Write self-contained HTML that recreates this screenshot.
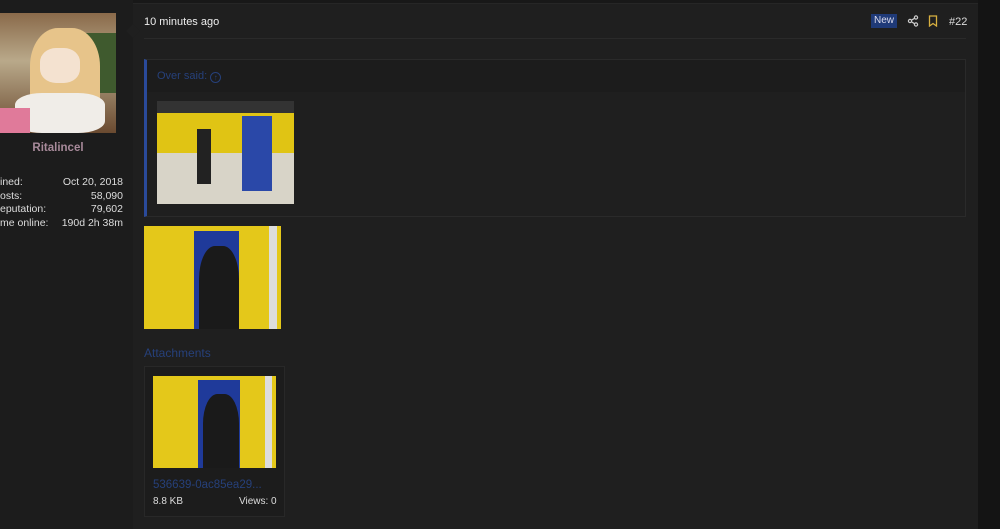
<!DOCTYPE html>
<html><head><style>
*{margin:0;padding:0;box-sizing:border-box}
body{width:1000px;height:529px;overflow:hidden;background:#1b1b1b;font-family:"Liberation Sans",sans-serif;color:#e6e6e6;position:relative;font-size:11px}
.abs{position:absolute}
.side{left:0;top:0;width:133px;height:529px;background:#1c1c1c}
.main{left:133px;top:3px;width:845px;height:526px;background:#1f1f1f;border-top:1px solid #262626}
.right{left:978px;top:0;width:22px;height:529px;background:#141414}
.stat{left:0;width:123px;font-size:10.5px;color:#ddd}
.stat span{position:absolute;right:0}
</style></head><body>
<div class="abs" style="left:0;top:0;width:1000px;height:3px;background:#181818"></div>
<div class="abs side"></div>
<div class="abs main"></div>
<div class="abs right"></div>
<div class="abs" style="left:128px;top:26px;width:10px;height:10px;background:#1f1f1f;transform:rotate(45deg)"></div>
<div class="abs" style="left:0;top:13px;width:116px;height:120px;background:linear-gradient(#8a6a4a,#b9a98a 40%,#6a4a30);overflow:hidden">
 <div class="abs" style="left:75px;top:20px;width:41px;height:60px;background:#3f5a2e"></div>
 <div class="abs" style="left:30px;top:15px;width:70px;height:95px;background:#e7c48a;border-radius:40% 40% 20% 20%"></div>
 <div class="abs" style="left:40px;top:35px;width:40px;height:35px;background:#f4e2d0;border-radius:40%"></div>
 <div class="abs" style="left:15px;top:80px;width:90px;height:40px;background:#f0ede8;border-radius:30%"></div>
 <div class="abs" style="left:0;top:95px;width:30px;height:25px;background:#e07a9a"></div>
</div>
<div class="abs" style="left:0;top:142px;width:116px;text-align:center;font-weight:bold;font-size:11.5px;color:#a88a9a">Ritalincel</div>
<div class="abs stat" style="top:176px">ined:<span>Oct 20, 2018</span></div>
<div class="abs stat" style="top:190px">osts:<span>58,090</span></div>
<div class="abs stat" style="top:203px">eputation:<span>79,602</span></div>
<div class="abs stat" style="top:217px">me online:<span>190d 2h 38m</span></div>
<div class="abs" style="left:144px;top:16px;font-size:11px;color:#eee">10 minutes ago</div>
<div class="abs" style="left:144px;top:38px;width:822px;height:1px;background:#2a2a2a"></div>
<div class="abs" style="left:871px;top:14px;width:26px;height:14px;background:#1f3a78;color:#dde;font-size:10px;text-align:center;line-height:14px">New</div>
<svg class="abs" style="left:907px;top:15px" width="12" height="12" viewBox="0 0 12 12" fill="none" stroke="#ccc" stroke-width="1.2"><circle cx="9" cy="2.5" r="1.6"/><circle cx="3" cy="6" r="1.6"/><circle cx="9" cy="9.5" r="1.6"/><path d="M4.4 5.2L7.6 3.3M4.4 6.8L7.6 8.7"/></svg>
<svg class="abs" style="left:928px;top:15px" width="10" height="12" viewBox="0 0 10 12" fill="none" stroke="#d8b040" stroke-width="1.3"><path d="M1.5 1h7v10L5 8.5 1.5 11z"/></svg>
<div class="abs" style="left:949px;top:16px;font-size:11px;color:#ddd">#22</div>
<div class="abs" style="left:144px;top:59px;width:822px;height:158px;background:#1f1f1f;border:1px solid #2a2a2a;border-left:3px solid #2a4a9a"></div>
<div class="abs" style="left:147px;top:60px;width:818px;height:32px;background:#1c1c1c"></div>
<div class="abs" style="left:157px;top:70px;font-size:11px;color:#26407a">Over said: <span style="display:inline-block;width:11px;height:11px;border:1px solid #26407a;border-radius:50%;font-size:8px;text-align:center;line-height:9px;vertical-align:-1px">↑</span></div>
<div class="abs" style="left:157px;top:101px;width:137px;height:103px;background:#d8d4c8;overflow:hidden">
 <div class="abs" style="left:0;top:0;width:137px;height:15px;background:#333"></div>
 <div class="abs" style="left:0;top:12px;width:137px;height:40px;background:#e0c414"></div>
 <div class="abs" style="left:85px;top:15px;width:30px;height:75px;background:#2a48a8"></div>
 <div class="abs" style="left:40px;top:28px;width:14px;height:55px;background:#222"></div>
</div>
<div class="abs" style="left:144px;top:226px;width:137px;height:103px;background:#e4c81a;overflow:hidden">
 <div class="abs" style="left:50px;top:5px;width:45px;height:98px;background:#1f3a9a"></div>
 <div class="abs" style="left:55px;top:20px;width:40px;height:83px;background:#1a1a1a;border-radius:40% 40% 0 0"></div>
 <div class="abs" style="left:125px;top:0;width:8px;height:103px;background:#ddd"></div>
</div>
<div class="abs" style="left:144px;top:346px;font-size:12px;color:#26407a">Attachments</div>
<div class="abs" style="left:144px;top:366px;width:141px;height:151px;background:#1c1c1c;border:1px solid #282828"></div>
<div class="abs" style="left:153px;top:376px;width:123px;height:92px;background:#e4c81a;overflow:hidden">
 <div class="abs" style="left:45px;top:4px;width:42px;height:88px;background:#1f3a9a"></div>
 <div class="abs" style="left:50px;top:18px;width:36px;height:74px;background:#1a1a1a;border-radius:40% 40% 0 0"></div>
 <div class="abs" style="left:112px;top:0;width:7px;height:92px;background:#ddd"></div>
</div>
<div class="abs" style="left:153px;top:479px;font-size:11.5px;color:#26407a">536639-0ac85ea29...</div>
<div class="abs" style="left:153px;top:496px;font-size:10px;color:#ddd">8.8 KB</div>
<div class="abs" style="left:239px;top:496px;font-size:10px;color:#ddd">Views: 0</div>
</body></html>
